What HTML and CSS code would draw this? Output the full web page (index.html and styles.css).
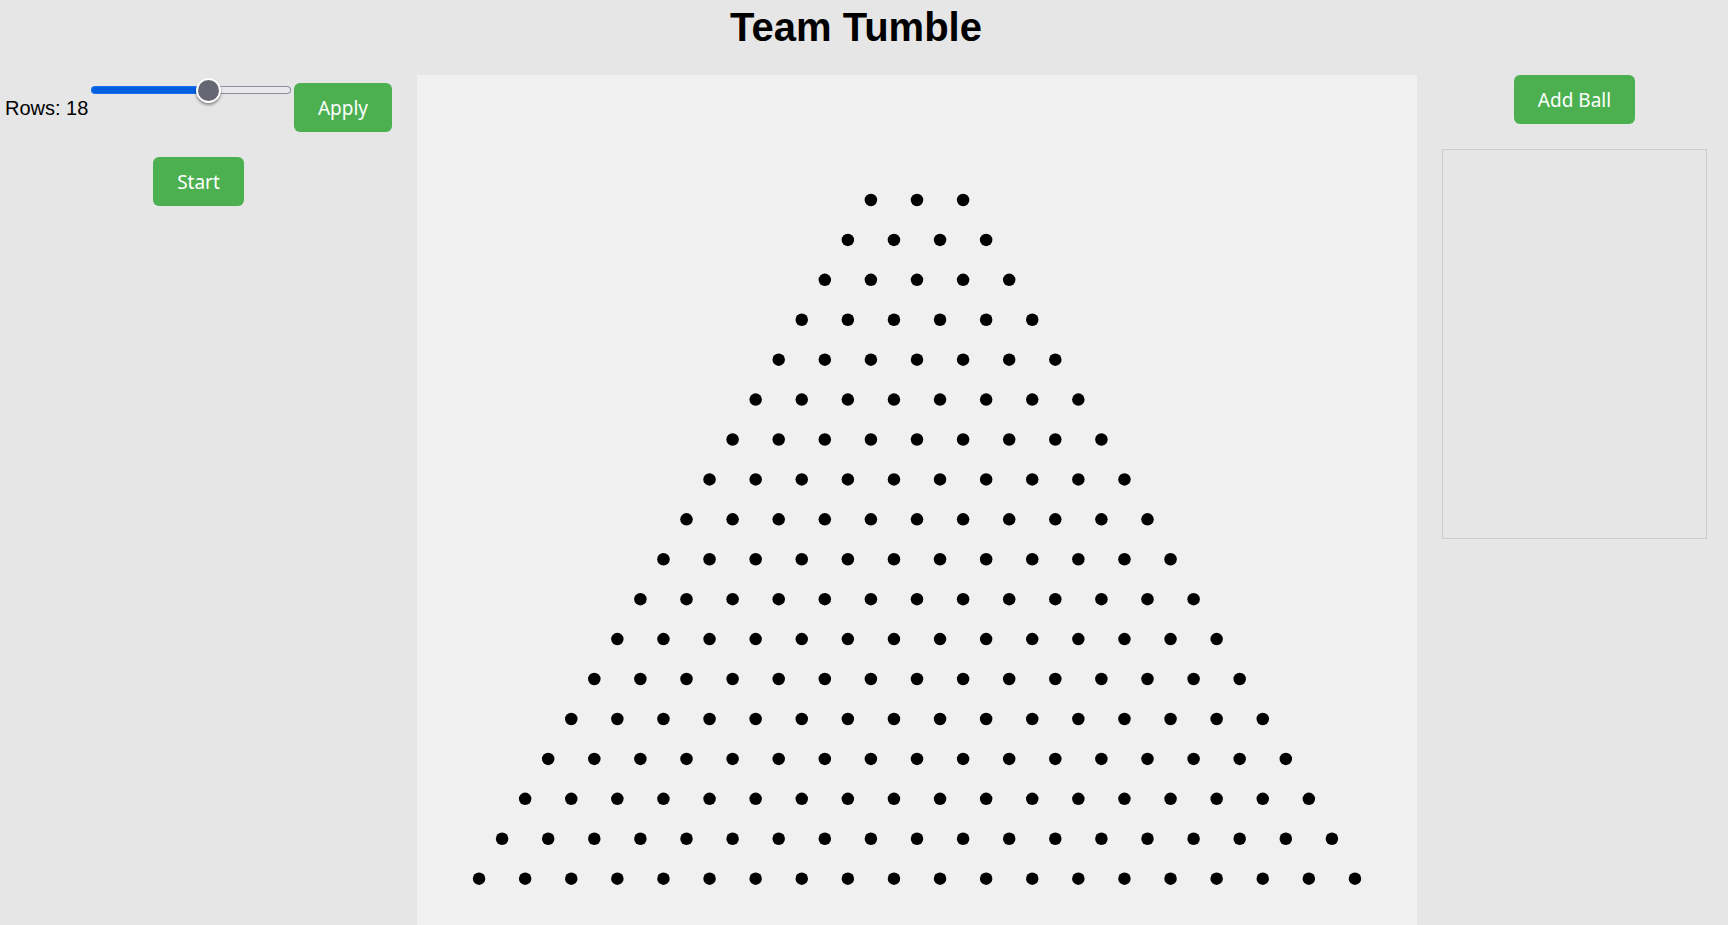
FILE: index.html
```html
<!DOCTYPE html>
<html lang="en">
<head>
<meta charset="utf-8">
<title>Team Tumble</title>
<link rel="stylesheet" href="styles.css">
</head>
<body>
<h1 class="title">Team Tumble</h1>
<main class="game">
  <section class="controls">
    <div class="rows-control">
      <label class="rows-label" for="rows">Rows: 18</label>
      <input class="rows-slider" id="rows" type="range" min="0" max="30" value="18">
      <button class="button" type="button">Apply</button>
    </div>
    <button class="button" type="button">Start</button>
  </section>
  <svg class="board" id="board" viewBox="0 0 1000 850" role="img" aria-label="Peg board"></svg>
  <section class="balls">
    <button class="button" type="button">Add Ball</button>
    <div class="ball-list"></div>
  </section>
</main>
<script src="board.js"></script>
</body>
</html>
```
FILE: styles.css
```css
* {
  box-sizing: border-box;
}

body {
  margin: 0;
  padding: 0 21px 0 5px;
  min-height: 100vh;
  overflow: hidden;
  background: #e6e6e6;
  color: #000;
  font: 20px/24px "Liberation Sans", Arial, sans-serif;
}

.title {
  margin: 0;
  padding: 4px 0 25px;
  font-size: 40px;
  line-height: 46px;
  text-align: center;
}

.game {
  display: grid;
  grid-template-columns: 387px 1fr 265px;
  gap: 25px;
  align-items: start;
}

.controls,
.balls {
  display: flex;
  flex-direction: column;
  align-items: center;
  gap: 25px;
}

.rows-control {
  display: flex;
  align-items: center;
  align-self: stretch;
  justify-content: space-between;
  padding-top: 8px;
}

.rows-slider {
  appearance: none;
  align-self: flex-start;
  width: 200px;
  height: 14px;
  margin: 0;
  background: none;
}

.rows-slider::-webkit-slider-runnable-track {
  height: 8px;
  border: 1px solid transparent;
  border-radius: 4px;
  background:
    linear-gradient(to right, #0060df 59%, transparent 59%) padding-box,
    linear-gradient(to right, transparent 59%, #e9e9ed 59%) padding-box,
    linear-gradient(to right, #1a6ff0 59%, #8f8f9d 59%) border-box;
}

.rows-slider::-webkit-slider-thumb {
  appearance: none;
  width: 25px;
  height: 25px;
  margin-top: -9px;
  border: 2px solid #fff;
  border-radius: 50%;
  background: #676774;
  box-shadow: 0 2px 3px rgba(0, 0, 0, 0.4);
}

.button {
  padding: 13px 24px 12px;
  border: 0;
  border-radius: 6px;
  background: #4caf50;
  color: #fff;
  font: 19px/24px "Noto Sans", "Open Sans", sans-serif;
}

.board {
  display: block;
  width: 100%;
  background: #f0f0f0;
}

.ball-list {
  width: 100%;
  height: 390px;
  border: 1px solid #ccc;
}
```
FILE: board.js
```js
const board = document.getElementById("board");
const rows = 18;
const spacingX = 46.1;
const spacingY = 39.92;

for (let row = 0; row < rows; row++) {
  const pegs = row + 3;
  for (let i = 0; i < pegs; i++) {
    const peg = document.createElementNS("http://www.w3.org/2000/svg", "circle");
    peg.setAttribute("cx", 500 + (i - (pegs - 1) / 2) * spacingX);
    peg.setAttribute("cy", 125 + row * spacingY);
    peg.setAttribute("r", 6.25);
    board.appendChild(peg);
  }
}
```
